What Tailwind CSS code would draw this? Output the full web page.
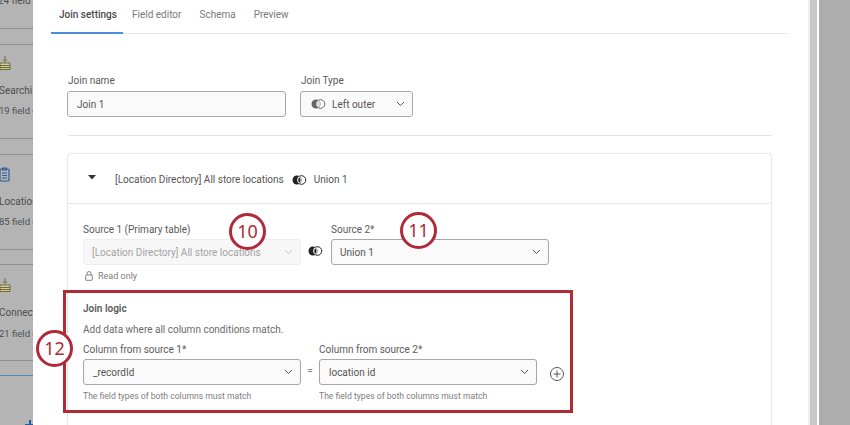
<!DOCTYPE html>
<html lang="en">

<head>
  <meta charset="UTF-8" />
  <title>Join settings</title>
  <script src="https://cdn.jsdelivr.net/npm/@tailwindcss/browser@4"></script>
</head>

<body class="bg-[#adadad] overflow-hidden">
  <div class="flex h-[425px] w-[850px] overflow-hidden font-['Roboto',sans-serif] text-[#525252]">

    <!-- dimmed list behind the modal -->
    <aside class="w-[33px] shrink-0 overflow-hidden bg-[#b4b4b4] text-[#4f4f4f] whitespace-nowrap">
      <div class="-mt-[5px] h-[34px] border-b border-[#8f8f8f] -ml-[2px] text-[10px] leading-[12px]">
        <p>24 field c</p>
      </div>
      <div class="h-[16px] border-b border-[#8f8f8f]"></div>
      <div class="h-[94px] border-b border-[#8f8f8f] pt-[11px]">
        <svg class="-ml-[1px]" width="12" height="15" viewBox="0 0 12 15" fill="none" stroke="#6b6a3c" stroke-width="1"><path d="M6 0v5M4 3.500 6 5.500 8 3.500"/><path d="M1 7h10v6.500H1zM1 9.500h10M1 11.500h10" fill="#d8cf9c"/></svg>
        <p class="mt-[13px] -ml-[1px] text-[10px] leading-[14px]">Searchi</p>
        <p class="mt-[7px] -ml-[1px] text-[9.500px] leading-[12px]">19 field c</p>
      </div>
      <div class="h-[16px] border-b border-[#8f8f8f]"></div>
      <div class="h-[95px] border-b border-[#8f8f8f] pt-[12px]">
        <svg class="-ml-[1px]" width="11" height="15" viewBox="0 0 11 15" fill="none" stroke="#2f5f9e" stroke-width="1.200"><rect x="1" y="2" width="9" height="12" rx="1"/><path d="M3.500 1h4v2h-4zM3 6h5M3 8.500h5M3 11h5"/></svg>
        <p class="mt-[13px] -ml-[1px] text-[10px] leading-[14px]">Location</p>
        <p class="mt-[7px] -ml-[1px] text-[9.500px] leading-[12px]">85 field c</p>
      </div>
      <div class="h-[15px] border-b border-[#8f8f8f]"></div>
      <div class="h-[96px] border-b border-[#8f8f8f] pt-[13px]">
        <svg class="-ml-[1px]" width="12" height="15" viewBox="0 0 12 15" fill="none" stroke="#6b6a3c" stroke-width="1"><path d="M6 0v5M4 3.500 6 5.500 8 3.500"/><path d="M1 7h10v6.500H1zM1 9.500h10M1 11.500h10" fill="#d8cf9c"/></svg>
        <p class="mt-[13px] -ml-[1px] text-[10px] leading-[14px]">Connec</p>
        <p class="mt-[8px] -ml-[1px] text-[9.500px] leading-[12px]">21 field c</p>
      </div>
      <div class="h-[15px] border-b border-[#4f86c6]"></div>
      <div class="relative h-[60px]">
        <span class="absolute left-[29px] top-[44px] h-[6px] w-[2px] bg-[#1f5fa8]"></span>
        <span class="absolute left-[25px] top-[48px] h-[1px] w-[8px] bg-[#1f5fa8]"></span>
      </div>
    </aside>

    <!-- modal -->
    <main class="w-[775px] shrink-0 bg-white pl-[18px] pr-[19px] overflow-hidden">
      <nav class="flex h-[34px] border-b border-[#e8e8e8] text-[10px]">
        <a class="h-[34px] w-[72px] border-b-2 border-[#4a90d9] pl-[8px] pt-[7px] font-medium leading-[16px] text-[#4a4a4a]">Join settings</a>
        <a class="ml-[9px] pt-[7px] leading-[16px] text-[#7a7a7a]">Field editor</a>
        <a class="ml-[18px] pt-[7px] leading-[16px] text-[#7a7a7a]">Schema</a>
        <a class="ml-[18px] pt-[7px] leading-[16px] text-[#7a7a7a]">Preview</a>
      </nav>

      <div class="pl-[16px]">
        <div class="mt-[40px] flex gap-[14px]">
          <div>
            <label class="ml-[1px] block text-[10px] leading-[14px] text-[#5a5a5a]">Join name</label>
            <div class="mt-[3px] flex h-[26px] w-[219px] items-center rounded-[3px] border border-[#a8a8a8] bg-[#fafafa] pl-[9px] text-[10px] text-[#555]">Join 1</div>
          </div>
          <div>
            <label class="ml-[1px] block text-[10px] leading-[14px] text-[#5a5a5a]">Join Type</label>
            <div class="mt-[3px] flex h-[26px] w-[113px] items-center rounded-[3px] border border-[#a8a8a8] bg-[#fafafa] pl-[10px] text-[10px] text-[#555]">
              <svg width="15" height="10" viewBox="0 0 15 10"><circle cx="9.500" cy="5" r="4.300" fill="#fff" stroke="#666"/><circle cx="5" cy="5" r="4.500" fill="#666"/><path d="M7.200 1.200a4.500 4.500 0 0 1 0 7.600a4.500 4.500 0 0 1 0-7.600z" fill="#ddd"/></svg>
              <span class="ml-[6px]">Left outer</span>
              <svg class="ml-auto mr-[7px]" width="9" height="6" viewBox="0 0 9 6" fill="none" stroke="#555" stroke-width="1"><path d="M1 1l3.500 3.500L8 1"/></svg>
            </div>
          </div>
        </div>
        <div class="mt-[18px] ml-[1px] h-[1px] w-[704px] bg-[#e4e4e4]"></div>

        <section class="mt-[17px] h-[300px] w-[705px] rounded-[4px] border border-[#e8e8e8] shadow-[0_0_2px_rgba(0,0,0,0.06)]">
          <div class="flex h-[50px] items-center border-b border-[#e8e8e8] pt-[2px] text-[10px] text-[#555]">
            <svg class="ml-[20px] -mt-[4px]" width="8" height="5" viewBox="0 0 8 5"><path d="M0 0h8L4 4.500z" fill="#333"/></svg>
            <span class="ml-[19px]">[Location Directory] All store locations</span>
            <svg class="ml-[8px]" width="15" height="10" viewBox="0 0 15 10"><circle cx="9.500" cy="5" r="4.300" fill="#fff" stroke="#222"/><circle cx="5" cy="5" r="4.500" fill="#222"/><path d="M7.200 1.200a4.500 4.500 0 0 1 0 7.600a4.500 4.500 0 0 1 0-7.600z" fill="#fff"/><ellipse cx="7.400" cy="5" rx="1.100" ry="2.600" fill="#222"/></svg>
            <span class="ml-[7px]">Union 1</span>
          </div>

          <div class="mt-[19px] flex pl-[15px]">
            <div>
              <label class="block text-[10px] leading-[14px] text-[#5a5a5a]">Source 1 (Primary table)</label>
              <div class="mt-[2px] flex h-[26px] w-[218px] items-center rounded-[3px] border border-[#eeeeee] bg-[#f7f7f7] pl-[8px] text-[10px] text-[#a3a3a3]">
                <span class="whitespace-nowrap">[Location Directory] All store locations</span>
                <svg class="ml-auto mr-[7px]" width="9" height="6" viewBox="0 0 9 6" fill="none" stroke="#c4c4c4" stroke-width="1"><path d="M1 1l3.500 3.500L8 1"/></svg>
              </div>
              <div class="mt-[5px] flex items-center text-[9px] leading-[12px] text-[#7d7d7d]">
                <svg class="ml-[2px] mr-[5px]" width="8" height="10" viewBox="0 0 8 10" fill="none" stroke="#777" stroke-width="0.900"><rect x="0.700" y="4" width="6.600" height="5.300" rx="0.500"/><path d="M2 4V2.500a2 2 0 0 1 4 0V4"/></svg>
                Read only
              </div>
            </div>
            <svg class="ml-[7px] mt-[23px]" width="15" height="10" viewBox="0 0 15 10"><circle cx="9.500" cy="5" r="4.300" fill="#fff" stroke="#222"/><circle cx="5" cy="5" r="4.500" fill="#222"/><path d="M7.200 1.200a4.500 4.500 0 0 1 0 7.600a4.500 4.500 0 0 1 0-7.600z" fill="#fff"/><ellipse cx="7.400" cy="5" rx="1.100" ry="2.600" fill="#222"/></svg>
            <div class="ml-[8px]">
              <label class="block text-[10px] leading-[14px] text-[#5a5a5a]">Source 2*</label>
              <div class="mt-[2px] flex h-[26px] w-[218px] items-center rounded-[3px] border border-[#a8a8a8] bg-[#fafafa] pl-[8px] text-[10px] text-[#555]">
                Union 1
                <svg class="ml-auto mr-[7px]" width="9" height="6" viewBox="0 0 9 6" fill="none" stroke="#555" stroke-width="1"><path d="M1 1l3.500 3.500L8 1"/></svg>
              </div>
            </div>
          </div>

          <div class="mt-[20px] pl-[15px]">
            <h3 class="text-[10px] font-semibold leading-[14px] text-[#5a5a5a]">Join logic</h3>
            <p class="mt-[7px] text-[10px] leading-[14px] text-[#6a6a6a]">Add data where all column conditions match.</p>
            <div class="mt-[6px] flex">
              <div>
                <label class="block text-[10px] leading-[14px] text-[#5a5a5a]">Column from source 1*</label>
                <div class="mt-[2px] flex h-[26px] w-[218px] items-center rounded-[3px] border border-[#a8a8a8] bg-[#fafafa] pl-[9px] text-[10px] text-[#555]">
                  _recordId
                  <svg class="ml-auto mr-[7px]" width="9" height="6" viewBox="0 0 9 6" fill="none" stroke="#555" stroke-width="1"><path d="M1 1l3.500 3.500L8 1"/></svg>
                </div>
                <p class="mt-[5px] text-[8.600px] leading-[12px] text-[#7d7d7d]">The field types of both columns must match</p>
              </div>
              <span class="mt-[20px] w-[18px] text-center text-[10px] text-[#888]">=</span>
              <div>
                <label class="block text-[10px] leading-[14px] text-[#5a5a5a]">Column from source 2*</label>
                <div class="mt-[2px] flex h-[26px] w-[218px] items-center rounded-[3px] border border-[#a8a8a8] bg-[#fafafa] pl-[9px] text-[10px] text-[#555]">
                  location id
                  <svg class="ml-auto mr-[7px]" width="9" height="6" viewBox="0 0 9 6" fill="none" stroke="#555" stroke-width="1"><path d="M1 1l3.500 3.500L8 1"/></svg>
                </div>
                <p class="mt-[5px] text-[8.600px] leading-[12px] text-[#7d7d7d]">The field types of both columns must match</p>
              </div>
              <svg class="ml-[12px] mt-[23px]" width="16" height="16" viewBox="0 0 16 16" fill="none" stroke="#555" stroke-width="1"><circle cx="8" cy="8" r="6.500"/><path d="M8 4.500v7M4.500 8h7"/></svg>
            </div>
          </div>
        </section>
      </div>
    </main>

    <!-- page edge on the right of the modal -->
    <div class="w-[2px] shrink-0 bg-[#efefef]"></div>
    <div class="w-[7px] shrink-0 bg-[#c9c9c9]"></div>
    <div class="w-[2px] shrink-0 bg-white"></div>
    <div class="flex-1 bg-[#adadad]"></div>
  </div>

  <!-- tutorial annotations on top of the screenshot -->
  <div class="pointer-events-none absolute left-[63px] top-[290px] h-[123px] w-[510px] border-[3px] border-[#b02a37]"></div>
  <div class="absolute left-[229px] top-[213px] flex h-[37px] w-[37px] items-center justify-center rounded-full border-[3px] border-[#b02a37] bg-white text-[18px] text-[#b02a37]">10</div>
  <div class="absolute left-[400px] top-[212px] flex h-[37px] w-[37px] items-center justify-center rounded-full border-[3px] border-[#b02a37] bg-white text-[18px] text-[#b02a37]">11</div>
  <div class="absolute left-[36px] top-[330px] flex h-[37px] w-[37px] items-center justify-center rounded-full border-[3px] border-[#b02a37] bg-white text-[18px] text-[#b02a37]">12</div>
</body>

</html>
